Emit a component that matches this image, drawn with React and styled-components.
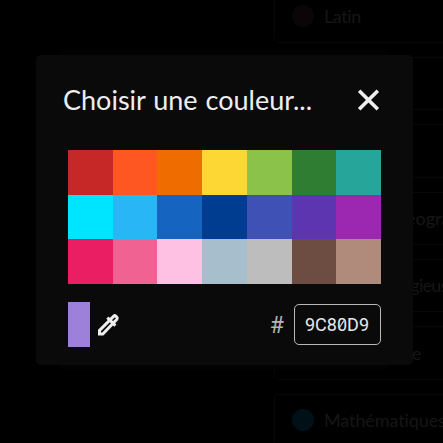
import React from "react";
import styled, { createGlobalStyle } from "styled-components";

const GlobalStyle = createGlobalStyle`
  * { box-sizing: border-box; }
  html, body { margin: 0; background: #000; overflow: hidden; }
`;

const Page = styled.main`
  position: relative;
  width: 443px;
  height: 443px;
  overflow: hidden;
  background: #000;
  font-family: Lato, sans-serif;
  font-variant-ligatures: none;
`;

const SubjectList = styled.ul`
  display: flex;
  flex-direction: column;
  gap: 14px;
  width: 220px;
  margin: -10.5px 0 0 274px;
  padding: 0;
  list-style: none;
`;

const Subject = styled.li`
  display: flex;
  flex: none;
  align-items: center;
  gap: 10px;
  height: 53.4px;
  padding: 0 0 1px 17px;
  border: 1px solid #080808;
  border-radius: 5px;
  color: #161616;
  font-size: 18px;
  letter-spacing: ${(p) => p.$spacing || "0"};
  white-space: nowrap;
`;

const Dot = styled.span`
  flex: none;
  width: 22px;
  height: 22px;
  border-radius: 50%;
  background: ${(p) => p.$color};
`;

const Backing = styled.div`
  position: absolute;
  left: 60px;
  top: 50px;
  width: 329px;
  height: 320px;
  border-radius: 5px;
  background: #020202;
`;

const Dialog = styled.section`
  position: absolute;
  left: 36px;
  top: 55px;
  width: 377px;
  height: 310px;
  padding: 29px 32px 18px;
  border-radius: 5px;
  background: #0a0a0a;
  color: #eee;
`;

const Header = styled.header`
  display: flex;
  align-items: center;
  justify-content: space-between;
  height: 32px;
  margin: 0 -2.5px 34px -5px;
`;

const Title = styled.h1`
  margin: 0;
  font-size: 27px;
  font-weight: 400;
  line-height: 32px;
  letter-spacing: 0;
  word-spacing: 1px;
  white-space: nowrap;
`;

const IconButton = styled.button`
  display: flex;
  padding: 0;
  border: 0;
  background: none;
  color: #eee;
`;

const Swatches = styled.div`
  display: grid;
  grid-template-columns: repeat(7, 1fr);
  grid-template-rows: repeat(3, 1fr);
  height: 134px;
`;

const Swatch = styled.div`
  background: ${(p) => p.$color};
`;

const Footer = styled.footer`
  display: flex;
  align-items: center;
  height: 45px;
  margin-top: 18px;
`;

const Preview = styled.div`
  width: 22px;
  height: 45px;
  margin-right: 4px;
  background: #9c80d9;
`;

const Hash = styled.span`
  margin: 2px 10px 0 auto;
  color: #b5b5b5;
  font: 23px/28px Roboto, sans-serif;
`;

const HexField = styled.div`
  display: flex;
  align-items: center;
  justify-content: center;
  width: 87px;
  height: 41px;
  padding-right: 1px;
  border: 1px solid #b8b8b8;
  border-radius: 5px;
  color: #e8e8e8;
  font: 18px/22px Roboto, sans-serif;
`;

const SlashedZero = styled.span`
  position: relative;
  &::after {
    content: "";
    position: absolute;
    left: 4.5px;
    top: 6px;
    width: 1.2px;
    height: 9px;
    background: currentColor;
    transform: rotate(32deg);
  }
`;

const subjects = [
  { name: "Latin", color: "#0b0605", spacing: "-0.4px" },
  { name: "", color: "#000" },
  { name: "", color: "#000" },
  { name: "Histoire-Géographie", color: "#000", spacing: "0" },
  { name: "Sciences religieuses", color: "#000", spacing: "-0.8px" },
  { name: "Informatique", color: "#000", spacing: "-0.4px" },
  { name: "Mathématiques", color: "#001018", spacing: "-0.1px" },
];

const colors = [
  "#c62828", "#ff5722", "#ef6c00", "#fdd835", "#8bc34a", "#2e7d32", "#26a69a",
  "#00e5ff", "#29b6f6", "#1565c0", "#003c8f", "#3f51b5", "#5e35b1", "#9c27b0",
  "#e91e63", "#f06292", "#ffc1e3", "#a7becd", "#bdbdbd", "#6d4c41", "#b08b7c",
];

export default function App() {
  return (
    <Page>
      <GlobalStyle />
      <SubjectList>
        {subjects.map((s, i) => (
          <Subject key={i} $spacing={s.spacing}>
            <Dot $color={s.color} />
            {s.name}
          </Subject>
        ))}
      </SubjectList>
      <Backing />
      <Dialog>
        <Header>
          <Title>Choisir une couleur...</Title>
          <IconButton aria-label="Fermer">
            <svg width="30" height="30" viewBox="0 0 30 30" fill="none" stroke="currentColor" strokeWidth="3.6">
              <path d="M5.2 5.7 23.8 24.3M23.8 5.7 5.2 24.3" />
            </svg>
          </IconButton>
        </Header>
        <Swatches>
          {colors.map((c) => <Swatch key={c} $color={c} />)}
        </Swatches>
        <Footer>
          <Preview />
          <IconButton aria-label="Pipette">
            <svg width="28" height="28" viewBox="0 0 28 28" fill="none" stroke="currentColor" strokeWidth="3">
              <path d="M5.5 23v-3.6L19.8 5.1q1-.9 2 0l1.1 1.1q.9 1 0 2L8.8 23z" />
              <path d="m13.4 6.6 8 8" />
            </svg>
          </IconButton>
          <Hash>#</Hash>
          <HexField><span>9C8<SlashedZero>0</SlashedZero>D9</span></HexField>
        </Footer>
      </Dialog>
    </Page>
  );
}
